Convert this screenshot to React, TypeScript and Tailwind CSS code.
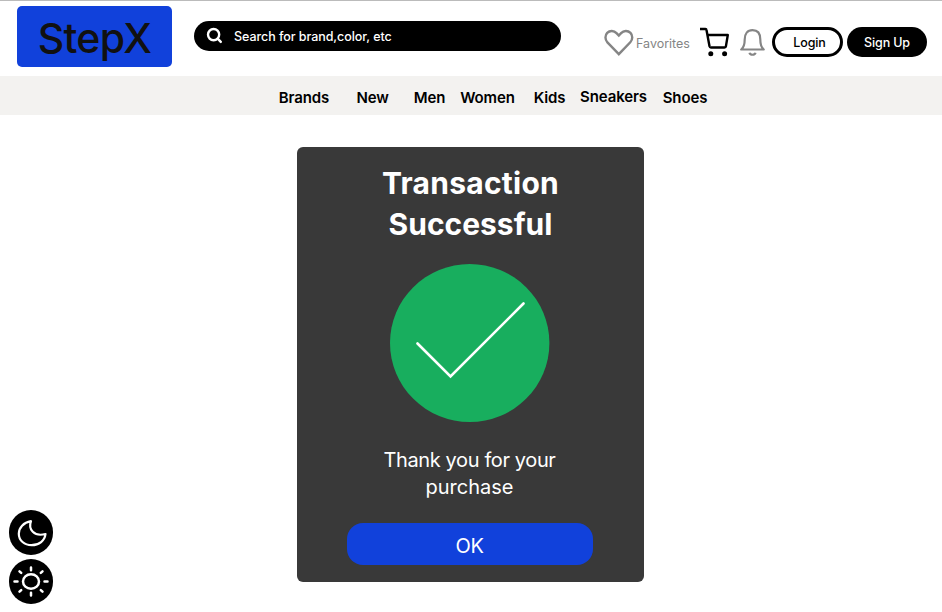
const links = [
  { label: "Brands", style: "ml-[279px] w-[50px]" },
  { label: "New", style: "ml-[28px] w-[31px]" },
  { label: "Men", style: "ml-[26px] w-[31px]" },
  { label: "Women", style: "ml-[15px] w-[55px]" },
  { label: "Kids", style: "ml-[19px] w-[31px]" },
  { label: "Sneakers", style: "ml-[15px] w-[67px] pb-px" },
  { label: "Shoes", style: "ml-[15px] w-[46px]" },
];

function Header() {
  return (
    <header className="flex h-[76px] items-start border-t border-[#bbbbbb] bg-white">
      <div className="ml-[17px] mt-[5px] flex h-[61px] w-[155px] items-center justify-center rounded-[5px] bg-[#1141db] pt-[3px]">
        <span className="whitespace-nowrap text-[41px] font-medium leading-none tracking-[-0.7px] text-[#111]">StepX</span>
      </div>
      <div className="ml-[22px] mt-[20px] flex h-[30px] w-[367px] items-center rounded-full bg-black text-white">
        <svg className="ml-[12px] h-[18px] w-[18px]" viewBox="0 0 18 18" fill="none" stroke="currentColor" strokeWidth="2.4">
          <circle cx="7.6" cy="7.6" r="5.6" />
          <path d="M11.700 11.700 14.800 14.900" strokeLinecap="round" />
        </svg>
        <span className="ml-[10px] whitespace-nowrap pt-[3px] text-[12.5px] font-medium tracking-[-0.06px]">Search for brand,color, etc</span>
      </div>
      <svg className="ml-[43px] mt-[28px] h-[28px] w-[30px]" viewBox="0 0 30 28" fill="none" stroke="#858585" strokeWidth="2.4">
        <path d="M14.8 25.2 3.4 13.3C.9 10.6.8 6.4 3.2 3.9c2.6-2.7 6.7-2.6 9.3.2l2.3 2.5 2.3-2.5c2.6-2.8 6.8-2.9 9.4-.2 2.4 2.5 2.3 6.7-.2 9.4Z" />
      </svg>
      <span className="ml-[2px] mt-[34px] w-[54px] whitespace-nowrap text-[12.5px] leading-[18px] text-[#858585]">Favorites</span>
      <svg className="ml-[10px] mt-[26px] h-[30px] w-[30px]" viewBox="0 0 30 30" fill="none" stroke="#000" strokeWidth="2.4">
        <path d="M0 2h5.400c.7 0 1 .3 1.100 1L9.500 19.300c.2.8.7 1.200 1.400 1.200h13.600c.8 0 1.300-.3 1.400-1.100L27.800 8H7.200" strokeLinejoin="round" />
        <circle cx="10.8" cy="26.8" r="2.5" fill="#000" stroke="none" />
        <circle cx="24.6" cy="26.8" r="2.5" fill="#000" stroke="none" />
      </svg>
      <svg className="ml-[10px] mt-[27px] h-[29px] w-[25px]" viewBox="0 0 25 29" fill="none" stroke="#858585" strokeWidth="2.2">
        <path d="M1.200 21.500H23.800C21.200 19.500 20.300 16 20.300 11.500 20.300 5.500 17.500 2.200 12.500 2.200S4.700 5.500 4.700 11.500C4.700 16 3.800 19.500 1.200 21.500Z" strokeLinejoin="round" />
        <path d="M9.500 24.800c.6 2.600 5.400 2.600 6 0" />
      </svg>
      <button className="ml-[7px] mt-[26px] h-[30px] w-[71px] whitespace-nowrap rounded-full border-3 border-black pl-[4px] pt-[2px] text-[12.5px] font-medium tracking-[-0.1px] text-black">Login</button>
      <button className="ml-[4px] mt-[26px] h-[30px] w-[80px] whitespace-nowrap rounded-full bg-black pt-[2px] text-[12.5px] font-medium tracking-[-0.15px] text-white">Sign Up</button>
    </header>
  );
}

export default function App() {
  return (
    <div className="relative h-[612px] w-[942px] overflow-hidden bg-white font-['Inter','Liberation_Sans',sans-serif]">
      <Header />
      <nav className="flex h-[39px] items-center bg-[#f3f2f0] pt-[5px] text-[15px] font-semibold tracking-[-0.12px] text-black">
        {links.map((l) => (
          <a key={l.label} className={`flex shrink-0 justify-center whitespace-nowrap ${l.style}`}>{l.label}</a>
        ))}
      </nav>
      <main className="ml-[297px] mt-[32px] flex h-[435px] w-[347px] flex-col items-center rounded-[6px] bg-[#393939] text-white">
        <h1 className="mt-[16px] text-center text-[30px] font-bold leading-[41px]">
          <span className="tracking-[0.25px]">Transaction</span>
          <br />
          Successful
        </h1>
        <svg className="mr-[2px] mt-[19px] h-[158px] w-[160px]" viewBox="0 0 160 158" fill="none">
          <ellipse cx="79.700" cy="79" rx="79.700" ry="79" fill="#18ae5e" />
          <path d="M27.500 79.500 60.500 112.500 133.500 39.500" stroke="#fff" strokeWidth="2.600" strokeLinecap="round" />
        </svg>
        <p className="mr-[2px] mt-[25px] text-center text-[20px] leading-[27px]">
          <span className="tracking-[-0.38px]">Thank you for your</span>
          <br />
          purchase
        </p>
        <button className="mr-px mt-[22px] h-[42px] w-[246px] rounded-[16px] bg-[#1141db] pr-px pt-[3px] text-[20px] tracking-[-0.4px]">OK</button>
      </main>
      <div className="absolute left-[9px] top-[510px] flex flex-col gap-[4px]">
        <button className="h-[45px] w-[44px] rounded-full bg-black">
          <svg className="h-[45px] w-[44px]" viewBox="0 0 44 45" fill="none" stroke="#fff" strokeWidth="2.200" strokeLinejoin="round">
            <path d="M22 11.200C14.500 12.500 9.800 17.800 9.800 23.700c0 6.800 5.700 11.500 12.800 11.500 7.500 0 13.200-4.600 13.900-11.200-5.500 1.500-9.800.7-12.700-2.200-2.800-2.700-3.400-6.300-1.800-10.600Z" />
          </svg>
        </button>
        <button className="h-[45px] w-[44px] rounded-full bg-black">
          <svg className="h-[45px] w-[44px]" viewBox="0 0 44 45" fill="none" stroke="#fff" strokeWidth="2.500" strokeLinecap="round">
            <ellipse cx="22" cy="22.500" rx="8" ry="7.200" />
            <path d="M22 8.500v2.700M22 33.800v2.700M5.500 22.500h3M35.500 22.500h3M10.500 12.300l1.700 1.600M31.800 31.100l1.700 1.600M10.500 32.700l1.700-1.600M31.800 13.900l1.700-1.600" />
          </svg>
        </button>
      </div>
    </div>
  );
}
